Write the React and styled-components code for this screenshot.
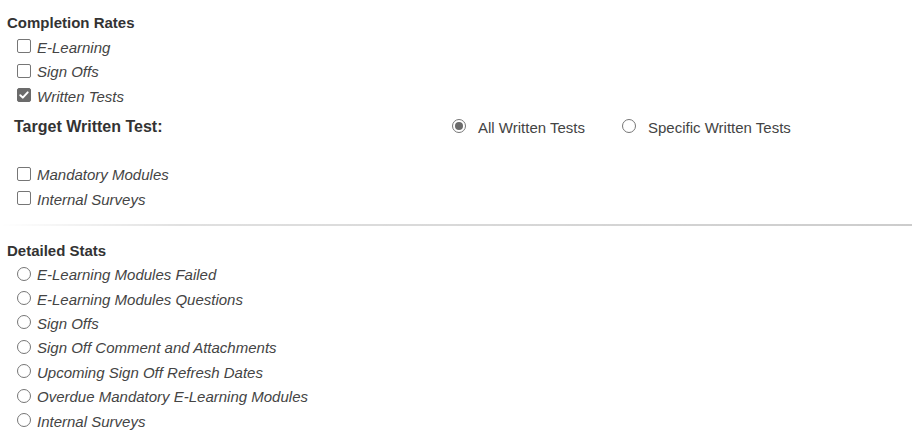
import React from "react";
import styled, { createGlobalStyle } from "styled-components";

const Global = createGlobalStyle`
  html, body { margin: 0; padding: 0; background: #fff; }
  body { font-family: "Liberation Sans", Arial, sans-serif; color: #333; }
`;

const Page = styled.div`
  padding: 11px 0 0 7px;
  width: 905px;
`;

const Heading = styled.div`
  font-weight: bold;
  font-size: 15px;
  line-height: 24px;
  color: #333;
`;

const List = styled.div`
  padding-left: 10px;
  display: flex;
  flex-direction: column;
`;

const Row = styled.label`
  display: flex;
  align-items: center;
  height: ${(p) => p.$h || 24.5}px;
  gap: 6px;
  font-style: italic;
  font-size: 15px;
  color: #444;
`;

const Box = styled.span`
  width: 14px;
  height: 14px;
  box-sizing: border-box;
  border: 1px solid #767676;
  border-radius: 2px;
  background: ${(p) => (p.$checked ? "#6b6b6b" : "#fff")};
  border-color: ${(p) => (p.$checked ? "#6b6b6b" : "#767676")};
  display: flex;
  align-items: center;
  justify-content: center;
  flex: none;
  margin-top: -2px;
`;

const Circle = styled.span`
  width: 14px;
  height: 14px;
  box-sizing: border-box;
  border: 1px solid #767676;
  border-radius: 50%;
  background: #fff;
  display: flex;
  align-items: center;
  justify-content: center;
  flex: none;
  margin-top: -2px;
  &::after {
    content: "";
    display: ${(p) => (p.$checked ? "block" : "none")};
    width: 8px;
    height: 8px;
    border-radius: 50%;
    background: #6b6b6b;
  }
`;

const TargetRow = styled.div`
  display: grid;
  grid-template-columns: 438px auto;
  align-items: center;
  height: 37px;
  margin-bottom: 17px;
  padding-left: 7px;
`;

const TargetLabel = styled.div`
  font-weight: bold;
  font-size: 16px;
  color: #333;
`;

const RadioGroup = styled.div`
  display: flex;
  align-items: center;
  gap: 37px;
`;

const RadioOption = styled.label`
  display: flex;
  align-items: center;
  gap: 12px;
  font-size: 15px;
  color: #444;
`;

const Divider = styled.div`
  height: 2px;
  margin: 12px 0 13px -7px;
  background: linear-gradient(to right, rgba(0,0,0,0) 0%, rgba(0,0,0,0.12) 20%, rgba(0,0,0,0.2) 100%);
`;

const Check = () => (
  <svg width="12" height="12" viewBox="0 0 12 12">
    <path d="M2.3 6.2 L4.8 8.6 L9.7 3.4" fill="none" stroke="#fff" strokeWidth="2" strokeLinecap="round" strokeLinejoin="round" />
  </svg>
);

const completion = [
  ["E-Learning", false],
  ["Sign Offs", false],
  ["Written Tests", true],
];

const stats = [
  "E-Learning Modules Failed",
  "E-Learning Modules Questions",
  "Sign Offs",
  "Sign Off Comment and Attachments",
  "Upcoming Sign Off Refresh Dates",
  "Overdue Mandatory E-Learning Modules",
  "Internal Surveys",
];

export default function App() {
  return (
    <Page>
      <Global />
      <Heading>Completion Rates</Heading>
      <List>
        {completion.map(([t, c]) => (
          <Row key={t}>
            <Box $checked={c}>{c && <Check />}</Box>
            {t}
          </Row>
        ))}
      </List>
      <TargetRow>
        <TargetLabel>Target Written Test:</TargetLabel>
        <RadioGroup>
          <RadioOption>
            <Circle $checked />
            All Written Tests
          </RadioOption>
          <RadioOption>
            <Circle />
            Specific Written Tests
          </RadioOption>
        </RadioGroup>
      </TargetRow>
      <List>
        <Row>
          <Box />
          Mandatory Modules
        </Row>
        <Row>
          <Box />
          Internal Surveys
        </Row>
      </List>
      <Divider />
      <Heading>Detailed Stats</Heading>
      <List>
        {stats.map((t) => (
          <Row key={t} $h={24.4}>
            <Circle />
            {t}
          </Row>
        ))}
      </List>
    </Page>
  );
}
